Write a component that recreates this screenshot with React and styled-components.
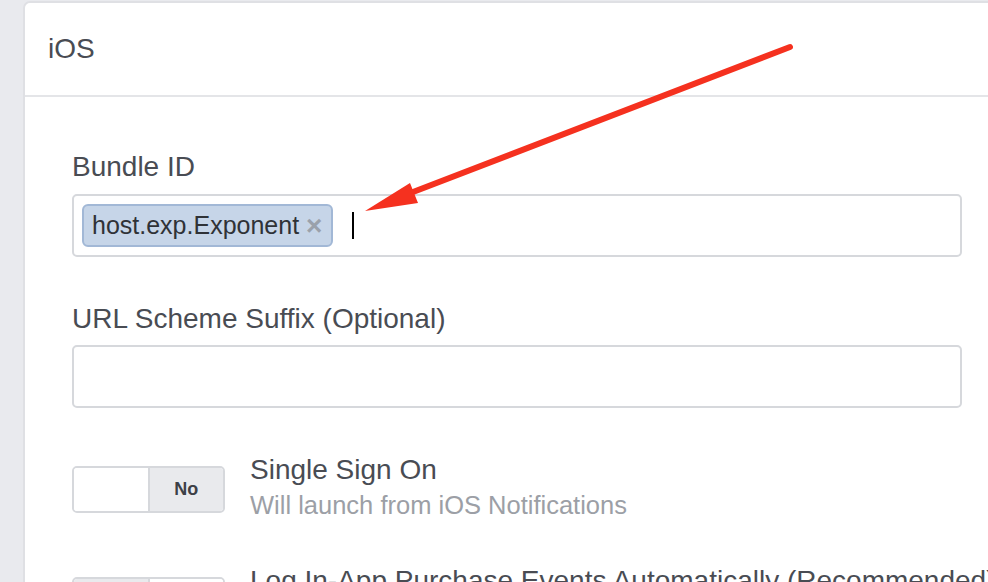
import React from "react";
import styled, { createGlobalStyle } from "styled-components";

const Global = createGlobalStyle`
  html, body { margin: 0; padding: 0; }
  body {
    background: #e9eaee;
    font-family: "Liberation Sans", Arial, sans-serif;
    overflow: hidden;
    width: 988px;
    height: 582px;
  }
`;

const Page = styled.div`
  position: relative;
  padding: 1px 0 0 23px;
  height: 581px;
  overflow: hidden;
`;

const Card = styled.section`
  width: 1020px;
  height: 640px;
  background: #ffffff;
  border: 2px solid #dfe0e4;
  border-radius: 7px;
  box-sizing: border-box;
`;

const CardHeader = styled.header`
  height: 92px;
  display: flex;
  align-items: center;
  padding: 0 23px;
  border-bottom: 2px solid #e4e5e8;
  font-size: 28px;
  color: #494c53;
`;

const CardBody = styled.div`
  padding: 53px 0 0 47px;
  display: flex;
  flex-direction: column;
`;

const Field = styled.div`
  display: flex;
  flex-direction: column;
  margin-bottom: ${(p) => p.$gap}px;
`;

const Label = styled.label`
  font-size: 28px;
  line-height: 34px;
  color: #494c53;
  margin-bottom: ${(p) => p.$gap}px;
`;

const InputBox = styled.div`
  width: 890px;
  height: 63px;
  box-sizing: border-box;
  border: 2px solid #d6d8dc;
  border-radius: 5px;
  padding: 8px;
  display: flex;
  align-items: center;
  gap: 19px;
`;

const Chip = styled.span`
  height: 43px;
  box-sizing: border-box;
  display: inline-flex;
  align-items: center;
  gap: 7px;
  padding: 0 9px 0 8px;
  background: #c6d5e8;
  border: 2px solid #a2b8d6;
  border-radius: 6px;
  font-size: 25px;
  color: #2f3237;
`;

const ChipClose = styled.span`
  font-size: 28px;
  font-weight: bold;
  color: #9aa1ab;
  line-height: 1;
`;

const Caret = styled.span`
  width: 2px;
  height: 27px;
  background: #000000;
`;

const ToggleRow = styled.div`
  display: flex;
  align-items: flex-start;
  gap: 25px;
  margin-top: ${(p) => p.$top}px;
`;

const Toggle = styled.div`
  margin-top: 13px;
  width: 153px;
  height: 47px;
  box-sizing: border-box;
  border: 2px solid #d6d8dc;
  border-radius: 5px;
  display: flex;
  overflow: hidden;
  flex-shrink: 0;
`;

const ToggleHalf = styled.div`
  flex: 1;
  display: flex;
  align-items: center;
  justify-content: center;
  background: ${(p) => (p.$active ? "#e9eaed" : "#ffffff")};
  border-left: ${(p) => (p.$right ? "2px solid #d6d8dc" : "none")};
  font-size: 18px;
  font-weight: bold;
  color: #3d4046;
`;

const ToggleText = styled.div`
  display: flex;
  flex-direction: column;
`;

const ToggleTitle = styled.div`
  font-size: 28px;
  line-height: 34px;
  color: #494c53;
  white-space: nowrap;
`;

const ToggleDesc = styled.div`
  margin-top: 2px;
  font-size: 25.5px;
  line-height: 32px;
  color: #9c9fa6;
  white-space: nowrap;
`;

const Arrow = styled.svg`
  position: absolute;
  left: 0;
  top: 0;
  pointer-events: none;
`;

export default function App() {
  return (
    <>
      <Global />
      <Page>
        <Card>
          <CardHeader>iOS</CardHeader>
          <CardBody>
            <Field $gap={45}>
              <Label $gap={10}>Bundle ID</Label>
              <InputBox>
                <Chip>
                  host.exp.Exponent
                  <ChipClose>×</ChipClose>
                </Chip>
                <Caret />
              </InputBox>
            </Field>
            <Field $gap={45}>
              <Label $gap={9}>URL Scheme Suffix (Optional)</Label>
              <InputBox />
            </Field>
            <ToggleRow $top={0}>
              <Toggle>
                <ToggleHalf />
                <ToggleHalf $right $active>No</ToggleHalf>
              </Toggle>
              <ToggleText>
                <ToggleTitle>Single Sign On</ToggleTitle>
                <ToggleDesc>Will launch from iOS Notifications</ToggleDesc>
              </ToggleText>
            </ToggleRow>
            <ToggleRow $top={43}>
              <Toggle>
                <ToggleHalf $active>Yes</ToggleHalf>
                <ToggleHalf $right />
              </Toggle>
              <ToggleText>
                <ToggleTitle>Log In-App Purchase Events Automatically (Recommended)</ToggleTitle>
              </ToggleText>
            </ToggleRow>
          </CardBody>
        </Card>
        <Arrow width="988" height="582" viewBox="0 0 988 582">
          <line x1="790" y1="47" x2="400" y2="197" stroke="#f5311f" strokeWidth="6" strokeLinecap="round" />
          <polygon points="365,211 410,183 418,203" fill="#f5311f" />
        </Arrow>
      </Page>
    </>
  );
}
